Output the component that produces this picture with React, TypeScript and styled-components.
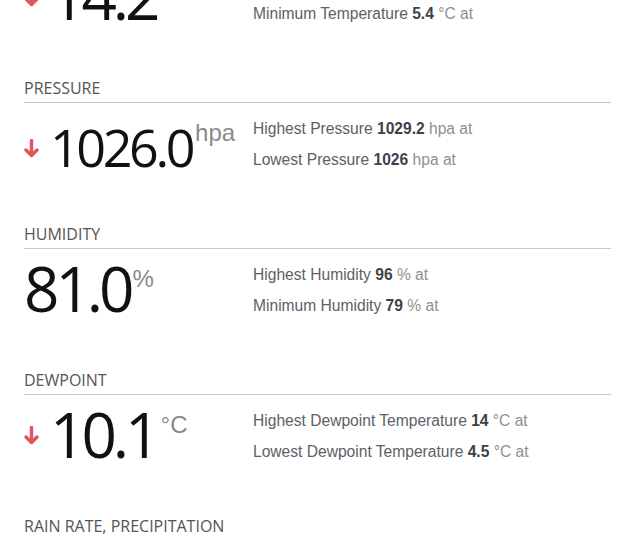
import React from "react";
import styled, { createGlobalStyle } from "styled-components";

const Global = createGlobalStyle`
  html, body { margin: 0; padding: 0; background: #fff; overflow: hidden; }
  body { font-family: "Open Sans", sans-serif; }
`;

const Page = styled.div`
  padding: 0 15px 0 24px;
  margin-top: -68px;
`;

const Section = styled.section`
  height: 146px;
`;

const Header = styled.h3`
  margin: 0;
  font-family: "Open Sans", sans-serif;
  font-weight: 400;
  font-size: 16px;
  line-height: 20px;
  color: #555;
  padding: 0 0 4px;
  border-bottom: 1px solid #c8c8c8;
  text-transform: uppercase;
`;

const Row = styled.div`
  display: grid;
  grid-template-columns: 229px 1fr;
`;

const Reading = styled.div<{ $size: number }>`
  display: flex;
  height: 70px;
  font-size: ${(p) => p.$size}px;
`;

const ArrowBox = styled.span`
  width: 26px;
  flex: none;
  align-self: flex-end;
  display: flex;
  margin-bottom: calc(0.469em - 9.5px);
  color: #e2545d;
`;

const Value = styled.span`
  align-self: flex-end;
  font-family: "Open Sans", sans-serif;
  font-weight: 400;
  font-size: 1em;
  line-height: 1;
  letter-spacing: -0.065em;
  color: #111;
`;

const Unit = styled.span<{ $gap: number }>`
  align-self: flex-start;
  font-family: "Liberation Sans", Arial, sans-serif;
  font-size: 24px;
  line-height: 24px;
  color: #8a8a8a;
  margin-top: 18px;
  margin-left: ${(p) => p.$gap}px;
`;

const Stats = styled.div`
  padding-top: 10px;
  font-family: "Liberation Sans", Arial, sans-serif;
  font-size: 15.6px;
  line-height: 31px;
  color: #5c6166;
`;

const Line = styled.div`
  white-space: nowrap;
`;

const Num = styled.b`
  color: #3c4248;
  font-weight: 700;
`;

const Muted = styled.span`
  color: #8c9094;
`;

const DownArrow = () => (
  <svg width="15" height="19" viewBox="0 0 15 19">
    <path d="M7.5 1.5 V16" stroke="currentColor" strokeWidth="3.4" strokeLinecap="round" fill="none" />
    <path d="M2 11 L7.5 16.5 L13 11" stroke="currentColor" strokeWidth="3.4" strokeLinecap="round" strokeLinejoin="round" fill="none" />
  </svg>
);

type Stat = { label: string; value: string; unit: string };
type Data = {
  title: string;
  value: string;
  size: number;
  unit: string;
  unitGap: number;
  down?: boolean;
  stats: Stat[];
};

const sections: Data[] = [
  {
    title: "Temperature",
    value: "14.2",
    size: 62,
    unit: "°C",
    unitGap: 4,
    down: true,
    stats: [
      { label: "Highest Temperature", value: "15.1", unit: "°C" },
      { label: "Minimum Temperature", value: "5.4", unit: "°C" },
    ],
  },
  {
    title: "Pressure",
    value: "1026.0",
    size: 52,
    unit: "hpa",
    unitGap: 3,
    down: true,
    stats: [
      { label: "Highest Pressure", value: "1029.2", unit: "hpa" },
      { label: "Lowest Pressure", value: "1026", unit: "hpa" },
    ],
  },
  {
    title: "Humidity",
    value: "81.0",
    size: 62,
    unit: "%",
    unitGap: 2,
    stats: [
      { label: "Highest Humidity", value: "96", unit: "%" },
      { label: "Minimum Humidity", value: "79", unit: "%" },
    ],
  },
  {
    title: "Dewpoint",
    value: "10.1",
    size: 62,
    unit: "°C",
    unitGap: 4,
    down: true,
    stats: [
      { label: "Highest Dewpoint Temperature", value: "14", unit: "°C" },
      { label: "Lowest Dewpoint Temperature", value: "4.5", unit: "°C" },
    ],
  },
];

export default function App() {
  return (
    <>
      <Global />
      <Page>
        {sections.map((s) => (
          <Section key={s.title}>
            <Header>{s.title}</Header>
            <Row>
              <Reading $size={s.size}>
                {s.down && (
                  <ArrowBox>
                    <DownArrow />
                  </ArrowBox>
                )}
                <Value>{s.value}</Value>
                <Unit $gap={s.unitGap}>{s.unit}</Unit>
              </Reading>
              <Stats>
                {s.stats.map((st) => (
                  <Line key={st.label}>
                    {st.label} <Num>{st.value}</Num> <Muted>{st.unit} at</Muted>
                  </Line>
                ))}
              </Stats>
            </Row>
          </Section>
        ))}
        <Section>
          <Header>Rain Rate, Precipitation</Header>
        </Section>
      </Page>
    </>
  );
}
